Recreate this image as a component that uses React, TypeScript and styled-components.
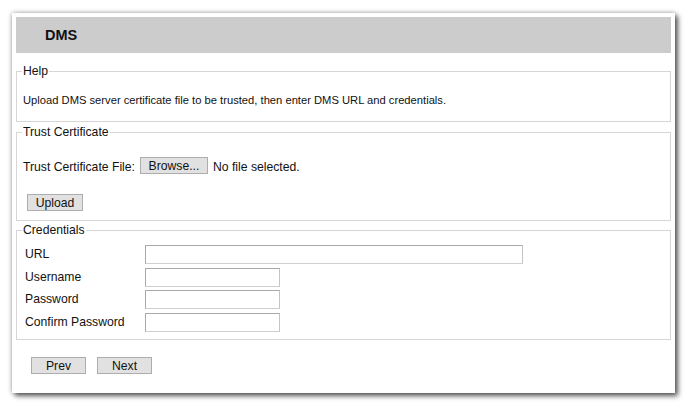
import React from "react";
import styled, { createGlobalStyle } from "styled-components";

const Global = createGlobalStyle`
  html, body { margin: 0; padding: 0; background: #ffffff; }
  body { font-family: "Liberation Sans", Arial, sans-serif; color: #111; }
`;

const Page = styled.div`
  box-sizing: border-box;
  min-height: 412px;
  padding: 13px 0 0 12px;
`;

const Card = styled.div`
  box-sizing: border-box;
  width: 663px;
  height: 380px;
  padding: 4px;
  background: #fff;
  box-shadow: 3px 3px 5px rgba(0, 0, 0, 0.6), 0 0 5px rgba(0, 0, 0, 0.35);
  display: flex;
  flex-direction: column;
`;

const Header = styled.div`
  flex: none;
  height: 36px;
  background: #cccccc;
  display: flex;
  align-items: center;
  padding-left: 29px;
  font-weight: bold;
  font-size: 14.5px;
  color: #111;
`;

const Section = styled.fieldset<{ $top: number; $pt: number; $pb: number }>`
  flex: none;
  margin: ${(p) => p.$top}px 0 0 0;
  padding: ${(p) => p.$pt}px 6px ${(p) => p.$pb}px 6px;
  border: 1px solid #d6d6d6;
  min-width: 0;
`;

const Legend = styled.legend`
  padding: 0 1px;
  margin-left: -1px;
  font-size: 12.2px;
  line-height: 14px;
  color: #111;
`;

const HelpText = styled.div`
  font-size: 11.2px;
  line-height: 14px;
`;

const FileRow = styled.div`
  display: flex;
  align-items: flex-start;
  gap: 5px;
  height: 17px;
  font-size: 12.2px;
  line-height: 17px;
`;

const RowText = styled.span`
  margin-top: 2px;
`;

const Button = styled.button<{ $w: number }>`
  box-sizing: border-box;
  width: ${(p) => p.$w}px;
  height: 17px;
  padding: 2px 0 0 0;
  margin: 0;
  background: #e1e1e1;
  border: 1px solid #adadad;
  border-radius: 0;
  font-family: "Liberation Sans", Arial, sans-serif;
  font-size: 12.2px;
  color: #111;
  line-height: 13px;
`;

const UploadWrap = styled.div`
  display: flex;
  margin-top: 20px;
  padding-left: 4px;
`;

const Grid = styled.div`
  display: grid;
  grid-template-columns: 120px auto;
  row-gap: 3.67px;
  align-items: center;
  padding-left: 2px;
`;

const Label = styled.label`
  font-size: 12.2px;
  line-height: 19px;
`;

const Input = styled.input<{ $w: number }>`
  box-sizing: border-box;
  width: ${(p) => p.$w}px;
  height: 19px;
  margin: 0;
  padding: 0 3px;
  border: 1px solid #a9a9a9;
  border-bottom-color: #cfcfcf;
  border-right-color: #c4c4c4;
  border-radius: 0;
  outline: none;
  background: #fff;
  font-family: "Liberation Sans", Arial, sans-serif;
  font-size: 12px;
`;

const Nav = styled.div`
  flex: none;
  display: flex;
  gap: 11px;
  margin-top: 17px;
  padding-left: 15px;
`;

export default function App() {
  return (
    <>
      <Global />
      <Page>
        <Card>
          <Header>DMS</Header>
          <Section $top={11} $pt={15} $pb={14}>
            <Legend>Help</Legend>
            <HelpText>
              Upload DMS server certificate file to be trusted, then enter DMS URL and credentials.
            </HelpText>
          </Section>
          <Section $top={3} $pt={18} $pb={9}>
            <Legend>Trust Certificate</Legend>
            <FileRow>
              <RowText>Trust Certificate File:</RowText>
              <Button $w={68}>Browse...</Button>
              <RowText>No file selected.</RowText>
            </FileRow>
            <UploadWrap>
              <Button $w={56}>Upload</Button>
            </UploadWrap>
          </Section>
          <Section $top={2} $pt={8} $pb={7}>
            <Legend>Credentials</Legend>
            <Grid>
              <Label>URL</Label>
              <Input $w={378} type="text" />
              <Label>Username</Label>
              <Input $w={135} type="text" />
              <Label>Password</Label>
              <Input $w={135} type="password" />
              <Label>Confirm Password</Label>
              <Input $w={135} type="password" />
            </Grid>
          </Section>
          <Nav>
            <Button $w={55}>Prev</Button>
            <Button $w={55}>Next</Button>
          </Nav>
        </Card>
      </Page>
    </>
  );
}
